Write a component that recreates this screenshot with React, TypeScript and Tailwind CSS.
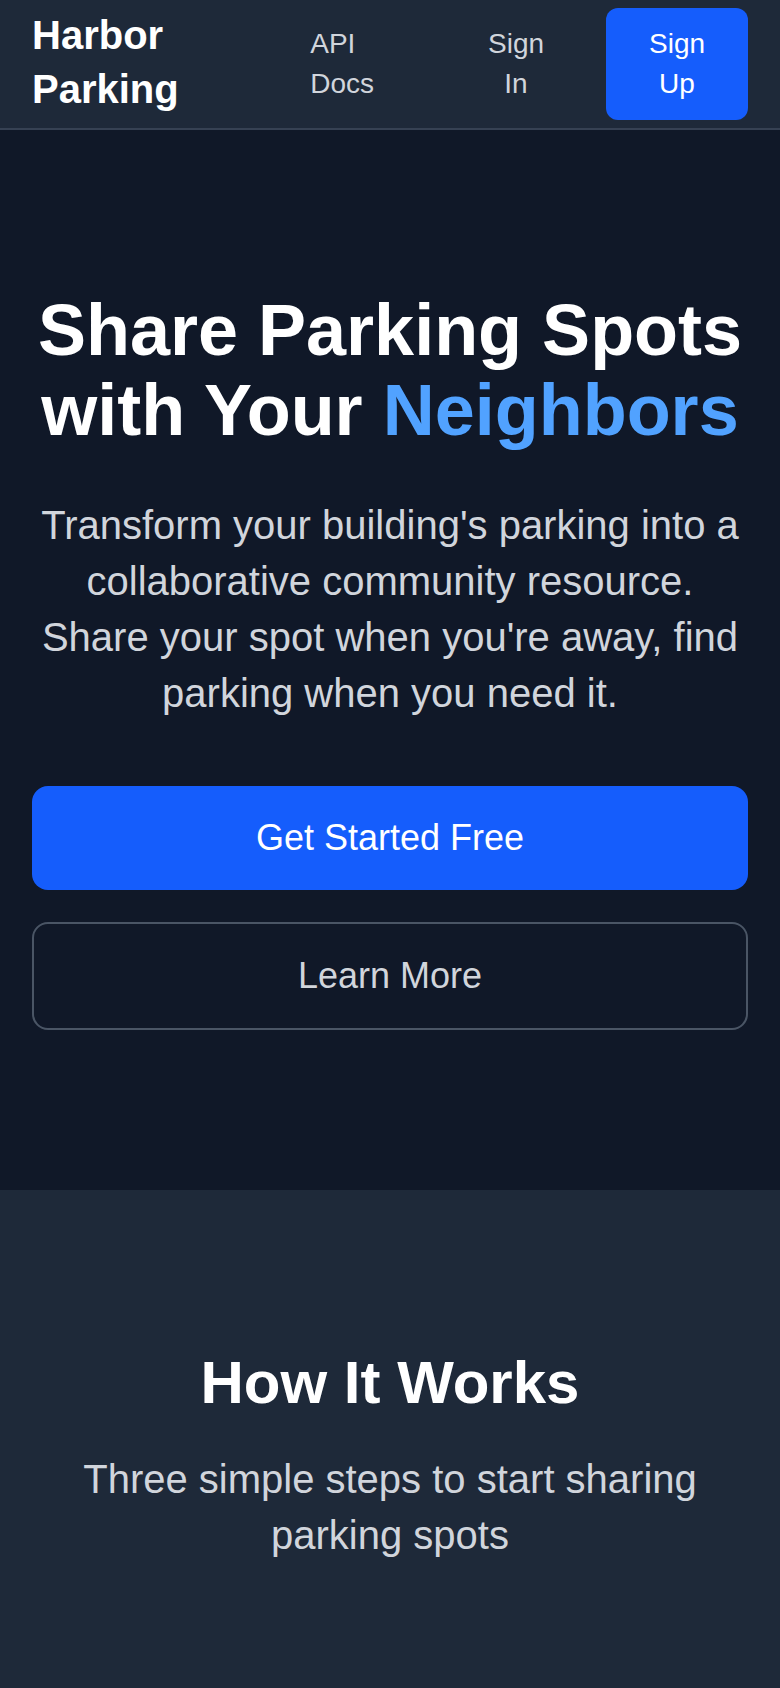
import React from "react";

const font = { fontFamily: '"Liberation Sans", Arial, Helvetica, sans-serif' };

export default function App() {
  return (
    <div className="min-h-[1688px] bg-[#1e2939] font-['Liberation_Sans',Arial,sans-serif]" style={font}>
      <header className="flex h-[130px] items-center justify-between border-b-2 border-[#364153] bg-[#1e2939] px-[32px]">
        <div className="mb-[5px] w-[180px] text-[40px] font-bold leading-[54px] text-white">Harbor Parking</div>
        <nav className="flex items-center">
          <a href="#" className="mr-[82px] w-min text-left text-[28px] leading-[40px] text-[#d1d5dc]">
            API Docs
          </a>
          <button className="mr-[30px] w-[120px] px-[32px] text-center text-[28px] leading-[40px] text-[#d1d5dc]">
            Sign In
          </button>
          <button className="w-[142px] rounded-[12px] bg-[#155dfc] px-[43px] py-[16px] text-center text-[28px] leading-[40px] text-white">
            Sign Up
          </button>
        </nav>
      </header>

      <section className="bg-[#101828] px-[32px] py-[160px] text-center">
        <h1 className="mb-[47px] text-[72px] font-bold leading-[80px] text-white">
          Share Parking Spots with Your <span className="text-[#51a2ff]">Neighbors</span>
        </h1>
        <p className="mb-[65px] text-[40px] leading-[56px] text-[#d1d5dc]">
          Transform your building's parking into a collaborative community resource. Share your spot when you're away,
          find parking when you need it.
        </p>
        <div className="flex flex-col gap-[32px]">
          <button className="w-full rounded-[16px] bg-[#155dfc] py-[24px] text-[36px] leading-[56px] text-white">
            Get Started Free
          </button>
          <button className="w-full rounded-[16px] border-2 border-[#4a5565] bg-transparent py-[24px] text-[36px] leading-[56px] text-[#d1d5dc]">
            Learn More
          </button>
        </div>
      </section>

      <section className="bg-[#1e2939] px-[32px] pt-[157px] pb-[160px] text-center">
        <h2 className="mb-[32px] text-[60px] font-bold leading-[72px] text-white">How It Works</h2>
        <p className="text-[40px] leading-[56px] text-[#d1d5dc]">Three simple steps to start sharing parking spots</p>
      </section>
    </div>
  );
}
